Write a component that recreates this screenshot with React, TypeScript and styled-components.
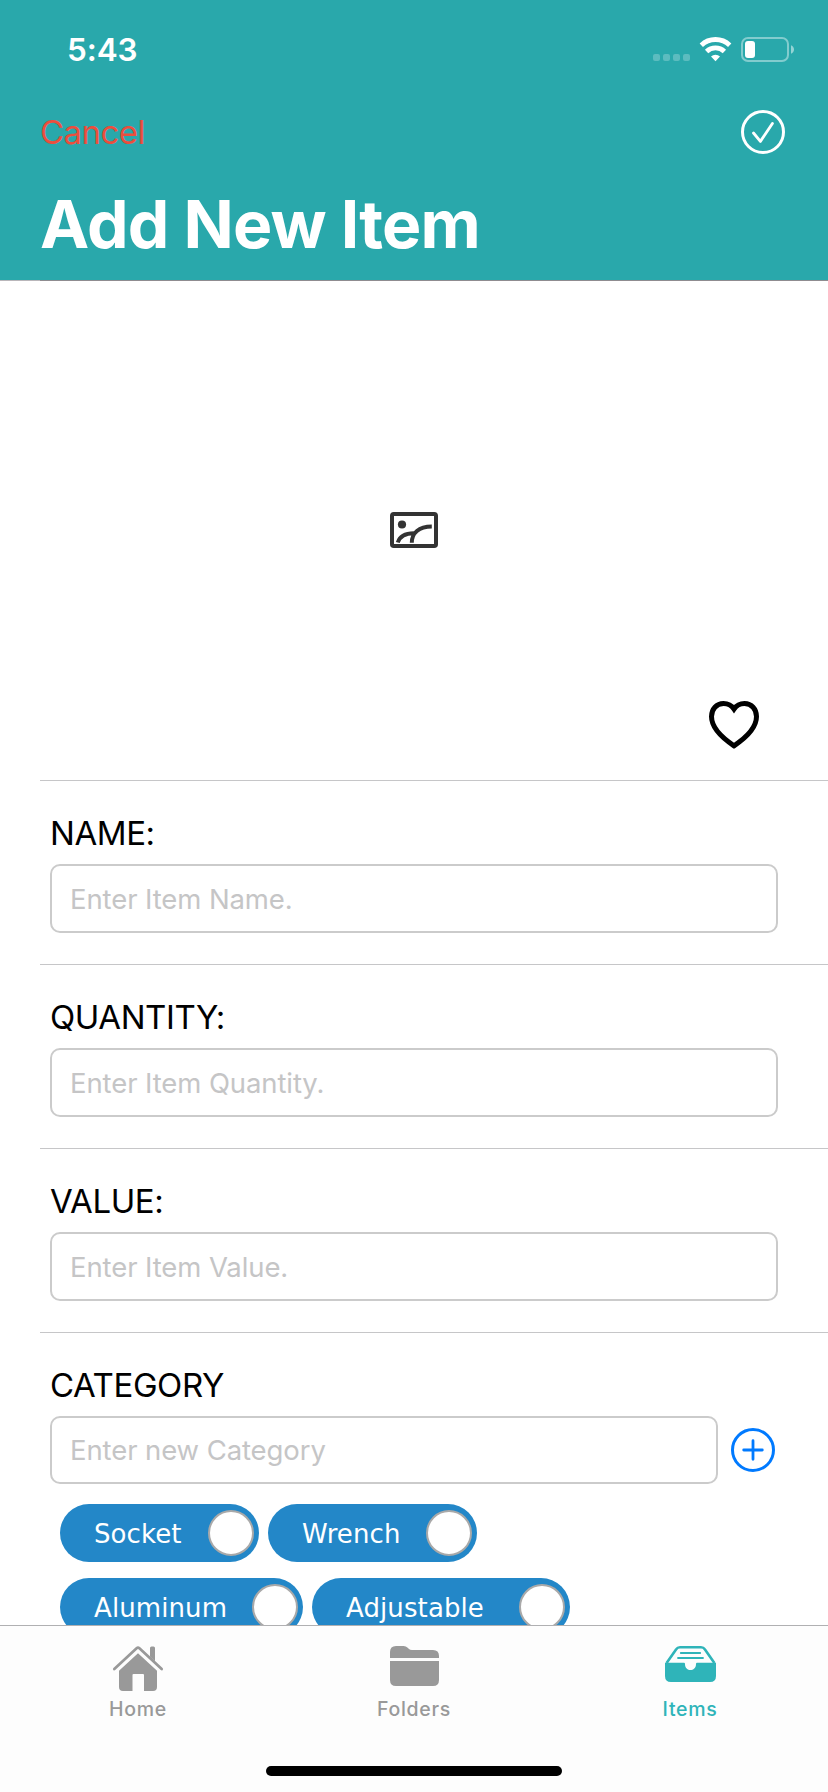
import React from "react";
import styled, { createGlobalStyle } from "styled-components";

const GlobalStyle = createGlobalStyle`
  * { box-sizing: border-box; }
  body { margin: 0; background: #fff; font-family: Inter, "Liberation Sans", sans-serif; }
  svg { display: block; flex: none; overflow: visible; }
  button { border: 0; padding: 0; margin: 0; background: none; font-family: inherit; }
`;

const Screen = styled.div`
  width: 828px;
  height: 1792px;
  display: flex;
  flex-direction: column;
  overflow: hidden;
  background: #fff;
`;

const Header = styled.header`
  flex: none;
  height: 280px;
  background: #29a8ab;
  color: #fff;
`;

const StatusBar = styled.div`
  height: 99px;
  padding: 0 33px 0 67px;
  display: flex;
  justify-content: space-between;
`;

const Clock = styled.span`
  margin-top: 30px;
  line-height: 40px;
  font-size: 31.5px;
  font-weight: 600;
  letter-spacing: -0.1px;
`;

const StatusGlyphs = styled.div`
  margin-top: 37px;
`;

const NavRow = styled.div`
  height: 66px;
  padding: 0 43px 0 40px;
  display: flex;
  align-items: center;
  justify-content: space-between;
`;

const CancelButton = styled.button`
  color: #eb4e3d;
  font-size: 33px;
  line-height: 40px;
  letter-spacing: -0.55px;
`;

const Title = styled.h1`
  margin: 19px 0 0 40px;
  font-size: 66px;
  line-height: 80px;
  font-weight: 700;
  letter-spacing: -0.8px;
`;

const HeaderEdge = styled.div`
  flex: none;
  height: 1px;
  background: linear-gradient(to right, #b9b6ba 40px, #8f8c90 40px);
`;

const Form = styled.main`
  flex: 1;
  min-height: 0;
  overflow: hidden;
  padding-left: 40px;
`;

const Cell = styled.section<{ $height: number }>`
  height: ${(p) => p.$height}px;
  border-bottom: 1px solid #c6c6c8;
  padding: 32px 50px 0 10px;
`;

const PhotoCell = styled.section`
  height: 500px;
  border-bottom: 1px solid #c6c6c8;
  padding: 231px 69px 31px 0;
  display: flex;
  flex-direction: column;
  justify-content: space-between;
`;

const PhotoSlot = styled.div`
  padding-left: 350px;
`;

const Favorite = styled.div`
  display: flex;
  justify-content: flex-end;
`;

const Label = styled.label`
  display: block;
  line-height: 40px;
  margin-bottom: 11px;
  color: #000;
  font-size: 33px;
  letter-spacing: -0.42px;
`;

const Input = styled.input<{ $height?: number }>`
  display: block;
  width: 100%;
  min-width: 0;
  height: ${(p) => p.$height ?? 69}px;
  margin: 0;
  padding: 0 18px;
  border: 2px solid #cbcbcb;
  border-radius: 10px;
  background: #fff;
  outline: none;
  font-family: inherit;
  font-size: 27.5px;
  letter-spacing: -0.1px;
  &::placeholder { color: #c5c5c6; opacity: 1; }
`;

const AddRow = styled.div`
  display: flex;
  align-items: center;
  gap: 13px;
  padding-right: 3px;
`;

const TagList = styled.div`
  display: flex;
  flex-wrap: wrap;
  gap: 16px 9px;
  padding: 20px 140px 0 10px;
`;

const Tag = styled.button<{ $width: number }>`
  width: ${(p) => p.$width}px;
  height: 58px;
  border-radius: 29px;
  padding: 0 5px 0 34px;
  display: flex;
  align-items: center;
  justify-content: space-between;
  background: #2387c8;
  color: #fff;
  font-family: "DejaVu Sans", sans-serif;
  font-size: 26px;
`;

const TagName = styled.span`
  padding-top: 2px;
  letter-spacing: 0.1px;
`;

const Knob = styled.span`
  width: 46px;
  height: 46px;
  border-radius: 50%;
  border: 2px solid #a9a9a9;
  background: #fff;
`;

const TabBar = styled.nav`
  flex: none;
  height: 167px;
  border-top: 1px solid #b0b0b2;
  background: #fdfdfd;
  display: flex;
  flex-direction: column;
  align-items: center;
`;

const Tabs = styled.div`
  width: 100%;
  height: 140px;
  display: grid;
  grid-template-columns: repeat(3, 1fr);
`;

const Tab = styled.button<{ $active?: boolean }>`
  display: flex;
  flex-direction: column;
  align-items: center;
  padding-top: 20px;
  color: ${(p) => (p.$active ? "#2fb4b9" : "#999")};
  font-size: 19.5px;
  line-height: 26px;
  font-weight: 450;
  letter-spacing: 0.7px;
`;

const TabIcon = styled.span`
  height: 50px;
`;

const HomeIndicator = styled.div`
  width: 296px;
  height: 10px;
  border-radius: 5px;
  background: #000;
`;

const StatusIcons = () => (
  <svg width="142" height="26" viewBox="653 37 142 26">
    <g fill="#fff" fillOpacity="0.24">
      {[653, 663, 673, 683].map((x) => (
        <rect key={x} x={x} y="54" width="7" height="7" rx="2" />
      ))}
    </g>
    <g fill="none" stroke="#fff" strokeWidth="4.8">
      <path d="M701.3 45.2a20.6 20.6 0 0 1 28.4 0" />
      <path d="M706.6 51.4a13 13 0 0 1 17.8 0" />
    </g>
    <path d="M711 56.6a6.6 6.6 0 0 1 9 0l-4.5 4.7z" fill="#fff" />
    <rect x="742" y="38" width="46" height="23" rx="6" fill="none" stroke="#fff" strokeOpacity="0.42" strokeWidth="2" />
    <rect x="745" y="41" width="10" height="17" rx="3" fill="#fff" />
    <path d="M791 45.3c4 1.6 4 7 0 8.4z" fill="#fff" fillOpacity="0.5" />
  </svg>
);

const CheckIcon = () => (
  <svg width="44" height="44" viewBox="0 0 44 44" fill="none" stroke="#fff" strokeLinecap="round" strokeLinejoin="round">
    <circle cx="22" cy="22" r="20.5" strokeWidth="3" />
    <path d="M12.5 23l6.9 8.4L31.4 13.5" strokeWidth="2.8" />
  </svg>
);

const PlusIcon = () => (
  <svg width="44" height="44" viewBox="0 0 44 44" fill="none" stroke="#007aff" strokeLinecap="round">
    <circle cx="22" cy="22" r="20.5" strokeWidth="3" />
    <path d="M12.7 22h18.6M22 12.7v18.6" strokeWidth="2.8" />
  </svg>
);

const PictureIcon = () => (
  <svg width="48" height="36" viewBox="0 0 48 36" fill="none" stroke="#333">
    <rect x="2" y="2" width="44" height="32" rx="1.8" strokeWidth="4" />
    <circle cx="12" cy="12.5" r="4.1" fill="#333" stroke="none" />
    <path d="M7.8 30.5c2-6.600 7-9.400 16.500-9.300M21.800 30.800c0-9.800 7-16.200 20-16.300" strokeWidth="4" />
  </svg>
);

const HeartIcon = () => (
  <svg width="50" height="49" viewBox="0 0 50 49" fill="none" stroke="#000" strokeWidth="5">
    <path d="M25 9C22.500 5.300 18.700 3.500 14.500 3.500C7.500 3.500 2.500 9 2.500 16.600C2.500 27.500 12.500 37.500 25 45.800C37.500 37.500 47.500 27.500 47.500 16.600C47.500 9 42.500 3.500 35.500 3.500C31.300 3.500 27.500 5.300 25 9Z" />
  </svg>
);

const HomeIcon = () => (
  <svg width="50" height="45" viewBox="0 0 50 45" fill="currentColor">
    <path d="M1.300 23L23.600 2.200q1.400-1.200 2.800 0L48.700 23" fill="none" stroke="currentColor" strokeWidth="2.700" strokeLinecap="round" />
    <path d="M37 2a1.500 1.500 0 0 1 1.500-1.500h2A1.500 1.500 0 0 1 42 2v13.200l-5-4.700z" />
    <path d="M25 7.200L44 24.800V41a4 4 0 0 1-4 4h-9V29a1 1 0 0 0-1-1H20.500a1 1 0 0 0-1 1v16H10a4 4 0 0 1-4-4V24.800z" />
  </svg>
);

const FolderIcon = () => (
  <svg width="49" height="40" viewBox="0 0 49 40" fill="currentColor">
    <path d="M0 12V6Q0 0 6 0h7.500q2.500 0 4.200 1.800l1 1Q20 4 22 4h21q6 0 6 6v2z" />
    <path d="M0 15h49v19q0 6-6 6H6q-6 0-6-6z" />
  </svg>
);

const TrayIcon = () => (
  <svg width="51" height="36" viewBox="0 0 51 36" fill="none" stroke="currentColor">
    <path d="M1.600 17L11.200 3.300Q12.500 1.300 15 1.300h21Q38.500 1.300 39.800 3.300L49.400 17" strokeWidth="2.600" />
    <path d="M15.800 7h19.400M13 12h25" strokeWidth="1.800" strokeLinecap="round" />
    <path d="M0 16.700h19q1 0 1 1.300c0 8 11 8 11 0q0-1.300 1-1.300h19V30q0 6-6 6H6q-6 0-6-6z" fill="currentColor" stroke="none" />
  </svg>
);

const fields = [
  { label: "NAME:", placeholder: "Enter Item Name." },
  { label: "QUANTITY:", placeholder: "Enter Item Quantity." },
  { label: "VALUE:", placeholder: "Enter Item Value." },
];

const tags = [
  { name: "Socket", width: 199 },
  { name: "Wrench", width: 209 },
  { name: "Aluminum", width: 243 },
  { name: "Adjustable", width: 258 },
];

const tabs = [
  { name: "Home", icon: <HomeIcon /> },
  { name: "Folders", icon: <FolderIcon /> },
  { name: "Items", icon: <TrayIcon />, active: true },
];

export default function App() {
  return (
    <Screen>
      <GlobalStyle />
      <Header>
        <StatusBar>
          <Clock>5:43</Clock>
          <StatusGlyphs>
            <StatusIcons />
          </StatusGlyphs>
        </StatusBar>
        <NavRow>
          <CancelButton>Cancel</CancelButton>
          <CheckIcon />
        </NavRow>
        <Title>Add New Item</Title>
      </Header>
      <HeaderEdge />
      <Form>
        <PhotoCell>
          <PhotoSlot>
            <PictureIcon />
          </PhotoSlot>
          <Favorite>
            <HeartIcon />
          </Favorite>
        </PhotoCell>
        {fields.map((f) => (
          <Cell key={f.label} $height={184}>
            <Label>{f.label}</Label>
            <Input placeholder={f.placeholder} />
          </Cell>
        ))}
        <Cell $height={320}>
          <Label>CATEGORY</Label>
          <AddRow>
            <Input $height={68} placeholder="Enter new Category" />
            <PlusIcon />
          </AddRow>
          <TagList>
            {tags.map((t) => (
              <Tag key={t.name} $width={t.width}>
                <TagName>{t.name}</TagName>
                <Knob />
              </Tag>
            ))}
          </TagList>
        </Cell>
      </Form>
      <TabBar>
        <Tabs>
          {tabs.map((t) => (
            <Tab key={t.name} $active={t.active}>
              <TabIcon>{t.icon}</TabIcon>
              {t.name}
            </Tab>
          ))}
        </Tabs>
        <HomeIndicator />
      </TabBar>
    </Screen>
  );
}
